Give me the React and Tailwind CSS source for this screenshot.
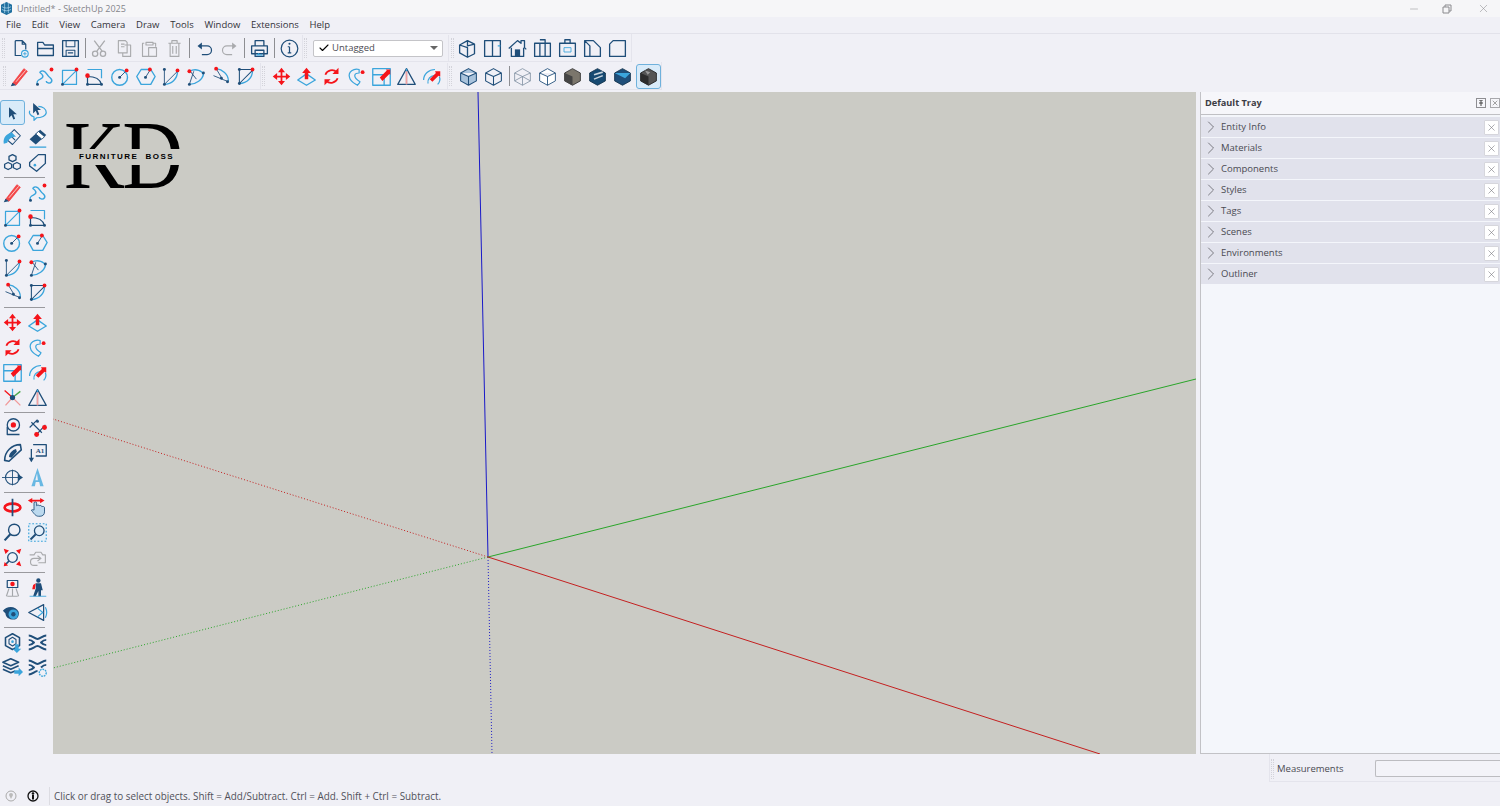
import { ChevronRight, X, Minus, Check } from "lucide-react";

const NAVY = "#1f4e79";
const BLUE = "#3ba5dc";
const RED = "#f5141a";
const GREY = "#a9aaad";

const R = ({ x, y, r = 2.2 }) => <circle cx={x} cy={y} r={r} fill={RED} stroke="none" />;
const N = ({ x, y, r = 1.7 }) => <circle cx={x} cy={y} r={r} fill={NAVY} stroke="none" />;
const B = ({ d, w = 1.4 }) => <path d={d} stroke={BLUE} strokeWidth={w} fill="none" />;
const D = ({ d, w = 1.4, f = "none" }) => <path d={d} stroke={NAVY} strokeWidth={w} fill={f} />;
const G = ({ d, w = 1.3 }) => <path d={d} stroke={GREY} strokeWidth={w} fill="none" />;
const F = ({ d, c = RED }) => <path d={d} fill={c} stroke="none" />;

const icons = {
  new: <><D d="M6 3h8l4 4v6M14 3v4h4M6 3v17h7" /><circle cx="17" cy="18" r="3.800" stroke={BLUE} strokeWidth="1.300" fill="none" /><B d="M17 16v4M15 18h4" w={1} /></>,
  open: <D d="M3 20V5h6l2 3h10v12zM3 12h18" w={1.500} />,
  save: <><D d="M3 3h18v18H3z" w={1.500} /><D d="M7 3v7h10V3M7 21v-7h10v7M9 17h6" w={1.200} /></>,
  cut: <><G d="M6 3l9 12M18 3l-9 12" w={1.500} /><circle cx="7" cy="18" r="3" stroke={GREY} strokeWidth="1.500" fill="none" /><circle cx="16" cy="18" r="3" stroke={GREY} strokeWidth="1.500" fill="none" /></>,
  copy: <><G d="M5 3h8l2 2v12H5zM8 7h4M8 10h4" /><G d="M12 8h7v13h-9v-4" /></>,
  paste: <><G d="M8 5h8v3H8zM6 6H4v15h7M16 6h3v4" /><G d="M11 11h9v10h-9z" /></>,
  trash: <G d="M5 6h14M9 6V3h6v3M7 6v15h10V6M10 9v9M14 9v9" />,
  undo: <><D d="M8 9h7a5 5 0 0 1 0 10H9" w={1.400} /><F c={NAVY} d="M4 9l5-4v8z" /></>,
  redo: <><G d="M16 9H9a5 5 0 0 0 0 10h6" /><F c={GREY} d="M20 9l-5-4v8z" /></>,
  print: <><D d="M7 9V3h10v6M3 9h18v9H3zM7 14h10v7H7z" w={1.500} /><path d="M8 20l3-3 2 2 1-1 2 2z" fill={BLUE} /></>,
  info: <><circle cx="12" cy="12" r="9.500" stroke={NAVY} strokeWidth="1.400" fill="none" /><D d="M12 10v7M10 17h4M10 10h2" /><N x={12} y={6.500} r={1.200} /></>,
  iso: <D d="M3 8l9-5 8 4v11l-8 4-9-5zM12 3v6l8-2M3 8l9 3v10" w={1.500} />,
  top: <><D d="M3 3h18v18H3zM12 3v18" w={1.500} /><B d="M18 9h3" /></>,
  front: <><D d="M2 12l10-9 4 3V3h4v8l2 2M5 11v10h14V11" w={1.500} /><path d="M9 21v-8h6v8z" fill={NAVY} /></>,
  right: <D d="M3 6h18v15H3zM9 6v15M15 6v15M9 2h6v4" w={1.500} />,
  back: <><D d="M3 6h18v15H3zM9 6V2h6v4" w={1.500} /><B d="M8 11h8v5H8z" w={1} /></>,
  left: <D d="M3 21V3l10 0 8 8v10zM3 3l6 6v12" w={1.500} />,
  bottom: <D d="M7 3h14v18H3V7z" w={1.500} />,
  pencil: <><path d="M4 20L17 3l4 3L8 22z" fill="#f24a4a" stroke={RED} strokeWidth=".6" /><path d="M8 18L19 5" stroke="#fff" strokeWidth=".8" /><path d="M2 23l2-4 4 3z" fill={NAVY} /></>,
  free: <><B d="M4 21C1 14 12 16 10 11 8 7 5 8 8 6c4-2 6 2 8 5 2 3 6 4 4 7-2 3-6 1-6-1" w={1.600} /><N x={4} y={21} /><R x={20} y={4} /></>,
  rect: <><B d="M4 5h16v16H4zM4 21L20 5" /><N x={4} y={21} /><R x={20} y={4} /></>,
  rrect: <><B d="M4 4h16v10" /><D d="M4 12c8 0 14 2 16 9M4 12v9h16" /><R x={4} y={11} r={2.600} /><N x={4} y={21} /><N x={20} y={21} /></>,
  circle: <><circle cx="11" cy="13" r="9" stroke={BLUE} strokeWidth="1.600" fill="none" /><D d="M11 13l8-8" w={1} /><N x={11} y={13} /><R x={19} y={5} /></>,
  poly: <><B d="M7 4h11l5 8-5 9H7l-5-9z" w={1.600} /><D d="M12 13l5-8" w={1} /><N x={12} y={13} /><R x={17} y={4} /></>,
  arc: <><B d="M5 21c8 0 15-6 15-15" w={1.600} /><D d="M5 21V5M5 21L20 6" w={1} /><N x={5} y={4} /><N x={5} y={21} /><R x={20} y={5} /></>,
  arc2: <><B d="M5 6c8-4 15 0 16 4-1 5-8 11-16 11" w={1.500} /><D d="M5 21l5-15M6 6l7 9" w={1} /><R x={5} y={6} /><N x={21} y={8} /><N x={5} y={21} /></>,
  arc3: <><B d="M7 3c7 1 14 6 14 14" w={1.500} /><D d="M4 11l17 7M7 3l6 10" w={1} /><R x={7} y={3} /><N x={20} y={18} /><N x={13} y={14} /></>,
  pie: <><B d="M5 20C14 20 20 13 20 5" w={1.500} /><D d="M5 4v16M5 4h15M5 20L20 5" w={1.200} /><N x={5} y={4} /><N x={5} y={20} /><R x={20} y={4} /></>,
  move: <F d="M12 2l4 5h-3v4h4V8l5 4-5 4v-3h-4v4h3l-4 5-4-5h3v-4H7v3l-5-4 5-4v3h4V7H8z" />,
  push: <><B d="M2 16l10-7 10 7-10 6z" w={1.600} /><path d="M12 2l5 6h-3v7h-4V8H7z" fill={RED} /></>,
  rotate: <><path d="M5 10a8 8 0 0 1 13-3" stroke={RED} strokeWidth="2" fill="none" /><path d="M19 14a8 8 0 0 1-13 3" stroke={RED} strokeWidth="2" fill="none" /><F d="M20 2v7h-7zM4 22v-7h7z" /></>,
  follow: <><B d="M15 4c-6-2-13 3-11 9 1 5 6 7 9 9 2-2 3-3 3-4-3-2-6-4-6-7 0-2 3-3 5-3z" /><R x={19} y={7} /></>,
  scale: <><B d="M2 3h20v19H2zM2 10h13v12" w={1.500} /><path d="M10 13l8-8-1-1h5v6l-1-1-8 8z" fill={RED} /></>,
  offset: <><D d="M2 21L12 3l10 18z" /><B d="M12 3v18" /><path d="M11 6h2v15h-2z" fill="#f2a0a0" /></>,
  offset2: <><B d="M3 16c0-7 6-12 13-12" /><B d="M8 20c-1-5 3-9 7-9M21 12c1 3 0 7-2 9" /><path d="M10 15l7-7-1-2h6v6l-2-1-7 7z" fill={RED} /></>,
  axes2: <><path d="M12 12L3 4" stroke={RED} strokeWidth="1.500" /><path d="M12 12L21 5" stroke="#4aa84a" strokeWidth="1.500" /><path d="M12 12V2" stroke={BLUE} strokeWidth="1.500" /><path d="M12 12L4 21M12 12l9 9" stroke="#f09a9a" strokeWidth="1.500" /><N x={12} y={12} r={3} /></>,
  select: <F c={NAVY} d="M8 6l9 8h-4l2 5-2 1-2-5-3 3z" />,
  lasso: <><B d="M13 5c5 0 9 3 9 7s-6 6-11 6l-3 3v-4C4 16 2 13 3 10" /><F c={NAVY} d="M7 1l9 8h-4l2 5-2 1-2-5-3 3z" /></>,
  paint: <><D d="M14 3l7 7-9 10-8-7zM9 9l6 6" w={1.200} /><path d="M2 19C1 12 5 8 11 6l5 5c-5 0-9 3-10 7z" fill={BLUE} /></>,
  erase: <><path d="M3 14L15 3l7 6-12 11z" fill={NAVY} /><path d="M13 5l7 6-3 3-7-6z" fill="#fff" stroke={NAVY} /><path d="M3 23h19" stroke={BLUE} strokeWidth="1.500" /></>,
  comps: <D d="M12 3l4 2v4l-4 2-4-2V5zM7 12l4 2v4l-4 2-4-2v-4zM17 12l4 2v4l-4 2-4-2v-4z" w={1.500} />,
  tag: <><D d="M3 12L13 3h8v10L11 22l-8-6z" w={1.500} /><circle cx="9" cy="15" r="1.500" fill={BLUE} /></>,
  tape: <><circle cx="13" cy="9" r="7" stroke={NAVY} strokeWidth="1.500" fill="none" /><R x={13} y={9} r={3} /><D d="M6 11v9h14" w={1.500} /></>,
  dim: <><D d="M3 12L12 3M10 21l11-12M5 6l12 12" w={1.300} /><R x={20} y={12} r={2.800} /><R x={11} y={20} r={2.800} /><N x={12} y={5} /></>,
  proto: <><path d="M3 21C3 11 11 3 21 3l1 6L8 22z" fill="none" stroke={NAVY} strokeWidth="1.800" /><path d="M8 17c0-4 4-8 8-9l1 3-6 7z" fill={NAVY} /></>,
  text: <><D d="M7 3h15v13H10" w={1.500} /><text x="10" y="13" fontSize="8" fontWeight="700" fill={NAVY} fontFamily="Liberation Serif">A1</text><D d="M5 8v14" w={1.500} /><F c={NAVY} d="M2 18h6l-3 5z" /></>,
  axes: <><circle cx="12" cy="12" r="8" stroke={NAVY} strokeWidth="1.300" fill="none" /><D d="M0 12h22M12 3v18" w={1} /><F c={NAVY} d="M18 8l6 4-6 4z" /></>,
  text3: <><path d="M12 1L5 22h4l1-5h4l1 5h4z" fill={BLUE} opacity=".75" /><path d="M11.500 7l-2 8h3z" fill="#f0f0f6" /></>,
  orbit: <><ellipse cx="12" cy="12" rx="9" ry="4.500" stroke={RED} strokeWidth="3" fill="none" /><path d="M11 2h2v20h-2z" fill={NAVY} /></>,
  pan: <><path d="M8 11V7c0-2 3-2 3 0v3c1-1 3-1 3 0 1-1 3 0 3 1 1-.5 3 0 3 1v5c0 3-2 5-5 5h-2c-3 0-5-3-8-7 1-1 3 0 3 0z" fill="#bcd9ee" stroke={NAVY} strokeWidth="1" /><F d="M1 4l5-3v2h9V1l5 3-5 3V5H6v2z" /></>,
  zoom: <><circle cx="14" cy="9" r="6.500" stroke={NAVY} strokeWidth="1.600" fill="none" /><path d="M9.500 14L3 21" stroke={NAVY} strokeWidth="2.500" /></>,
  zoomw: <><path d="M2 2h20v20H2z" stroke={BLUE} strokeWidth="1.300" strokeDasharray="2 2" fill="#e4eff9" /><circle cx="14" cy="10" r="5.500" stroke={NAVY} strokeWidth="1.500" fill="none" /><path d="M10 14l-6 6" stroke={NAVY} strokeWidth="2.200" /></>,
  zoome: <><circle cx="12" cy="12" r="5.500" stroke={NAVY} strokeWidth="1.500" fill="none" /><path d="M8 16l-4 4" stroke={NAVY} strokeWidth="2" /><path d="M2 2l6 2-4 4zM22 2l-2 6-4-4zM22 22l-6-2 4-4z" fill={RED} /><path d="M2 22l1-5 4 4z" fill={RED} /></>,
  prev: <><G d="M3 9h5l2-3h6l2 3h3v9h-8" /><G d="M12 21H8a4 4 0 0 1 0-8h8M12 10l4 3-4 3" /></>,
  camera: <><D d="M6 4h12v8H6z" w={1.400} /><R x={12} y={8} r={2.600} /><path d="M8 13L5 22M16 13l3 9M12 13v9M6 22h12" stroke="#a4a7ab" strokeWidth="1.300" /></>,
  walk: <><circle cx="13" cy="4" r="2.500" fill={NAVY} /><path d="M10 7h6l2 8h-2v7h-3v-6l-3 6H7l3-9z" fill={NAVY} /><path d="M7 9l3-2-1 7H6z" fill={RED} /><path d="M3 22h19" stroke={BLUE} strokeWidth="1" /></>,
  eye: <><path d="M1 10c4-6 15-6 18 1 1 4-1 9-6 9s-9-3-9-7z" fill={NAVY} /><circle cx="13" cy="14" r="5.500" fill={BLUE} /><circle cx="13" cy="14" r="2.500" fill={NAVY} /></>,
  section: <><D d="M2 12L19 3v18z" /><B d="M12 7l6 5-6 5" /><B d="M21 6c2 4 2 8 0 12" /></>,
  wh: <><D d="M12 2l8 4.500v9L12 20l-8-4.500v-9z" w={1.800} /><D d="M12 6l4 2.500v5L12 16l-4-2.500v-5z" w={1.200} /><F c={BLUE} d="M15 14h4v5h3l-5 5-5-5h3z" /><circle cx="12" cy="11" r="1.500" fill={BLUE} /></>,
  ext: <D d="M2 4c4 0 7 4 10 4s6-4 10-4M2 9c3 0 6 3 6 3s-3 3-6 3M22 9c-3 0-6 3-6 3s3 3 6 3M2 20c4 0 7-4 10-4s6 4 10 4" w={2.200} />,
  layers: <><D d="M10 2l9 4-9 4-9-4zM1 10l9 4 9-4M1 14l9 4 5-2" w={1.800} /><F c={BLUE} d="M14 15h5v-3l5 5-5 5v-3h-5z" /></>,
  extg: <><D d="M2 4c4 0 7 4 10 4s6-4 10-4M2 9c3 0 6 3 6 3s-3 3-6 3M22 9c-3 0-6 3-6 3M2 20c4 0 7-4 10-4" w={2.200} /><circle cx="18" cy="18" r="4" stroke={BLUE} strokeWidth="1.600" fill="none" strokeDasharray="2 1" /></>,
  sxray: <D d="M3 8l9-5 9 5v9l-9 5-9-5zM3 8l9 4 9-4M12 12v10" w={1.200} f="#a9c3dc" />,
  swire: <D d="M3 8l9-5 9 5v9l-9 5-9-5zM3 8l9 4 9-4M12 12v10" w={1.200} />,
  sline: <path d="M3 8l9-5 9 5v9l-9 5-9-5zM3 8l9 4 9-4M12 12v10M3 17l9-5 9 5" stroke="#7d8da0" strokeWidth=".900" fill="none" />,
  shidden: <D d="M3 8l9-5 9 5v9l-9 5-9-5zM3 8l9 4 9-4M12 12v10" w={1} f="#fff" />,
  sshade: <><path d="M3 8l9-5 9 5v9l-9 5-9-5z" fill="#7b766c" stroke="#333" strokeWidth="1" /><path d="M3 8l9 4v10l-9-5z" fill="#444" /></>,
  stex: <><path d="M3 8l9-5 9 5v9l-9 5-9-5z" fill="#174a72" stroke="#12324c" /><path d="M8 10l10-3M8 15l10-4" stroke="#c8d4dd" strokeWidth="1.800" /></>,
  smono: <><path d="M3 8l9-5 9 5v9l-9 5-9-5z" fill={NAVY} stroke="#12324c" /><path d="M3 8l18 0-6 6z" fill={BLUE} /></>,
  sall: <><path d="M3 8l9-5 9 5v9l-9 5-9-5z" fill="#555" stroke="#222" /><path d="M3 8l9 4v10l-9-5z" fill="#2c2c2c" /><path d="M8 5l6 2-3 3z" fill="#999" /></>,
};

function Icon({ name, active, size = 21 }) {
  return (
    <div className={`flex h-[25px] w-[25px] shrink-0 items-center justify-center ${active ? "rounded-[3px] border border-[#6fb1dc] bg-[#d9ebf9]" : ""}`}>
      <svg width={size} height={size} viewBox="0 0 24 24" strokeLinejoin="round">{icons[name]}</svg>
    </div>
  );
}

function Grip() {
  return <div className="mx-[1px] h-[20px] w-[3px] shrink-0 border-x border-dotted border-[#d3d3da]" />;
}

function VSep({ className = "mx-[2px]" }) {
  return <div className={`h-[20px] w-[1px] shrink-0 bg-[#8d8e92] ${className}`} />;
}

function Row({ names }) {
  return names.map((n) => <Icon key={n} name={n} />);
}

const menus = ["File", "Edit", "View", "Camera", "Draw", "Tools", "Window", "Extensions", "Help"];
const panels = ["Entity Info", "Materials", "Components", "Styles", "Tags", "Scenes", "Environments", "Outliner"];
const leftGroups = [
  [["select", "lasso"], ["paint", "erase"], ["comps", "tag"]],
  [["pencil", "free"], ["rect", "rrect"], ["circle", "poly"], ["arc", "arc2"], ["arc3", "pie"]],
  [["move", "push"], ["rotate", "follow"], ["scale", "offset2"], ["axes2", "offset"]],
  [["tape", "dim"], ["proto", "text"], ["axes", "text3"]],
  [["orbit", "pan"], ["zoom", "zoomw"], ["zoome", "prev"]],
  [["camera", "walk"], ["eye", "section"]],
  [["wh", "ext"], ["layers", "extg"]],
];

export default function App() {
  return (
    <div className="flex h-[806px] w-[1500px] flex-col overflow-hidden bg-[#f0f0f6] font-['Open_Sans','Liberation_Sans',sans-serif] text-[9.500px] text-[#3c3c44]">
      {/* title bar */}
      <div className="flex h-[17px] shrink-0 items-center bg-[#f6f6f8]">
        <svg className="ml-[1px] mr-[5px]" width="11" height="13" viewBox="0 0 12 14"><path d="M6 0l6 3v8l-6 3-6-3V3z" fill="#1f6f9f" /><path d="M1 5c3 2 7 2 10 0M1 8c3 2 7 2 10 0M4 1v11M8 1v11" stroke="#bfe3f5" strokeWidth=".7" fill="none" /></svg>
        <span className="text-[9px] text-[#85858b]">Untitled* - SketchUp 2025</span>
        <div className="ml-auto flex items-center text-[#8a8a8e]">
          <Minus size={12} strokeWidth={1} />
          <svg className="ml-[22px]" width="10" height="10" viewBox="0 0 10 10"><path d="M1 3h6v6H1zM3 3V1h6v6H7" fill="none" stroke="#8a8a8e" /></svg>
          <X className="ml-[25px] mr-[10px]" size={13} strokeWidth={1} />
        </div>
      </div>
      {/* menu */}
      <div className="flex h-[17px] shrink-0 items-center gap-[10.700px] border-b border-[#e2e2ea] pl-[6px] pt-[1px] text-[#33333a]">
        {menus.map((m) => <span key={m}>{m}</span>)}
      </div>
      {/* toolbar row 1 */}
      <div className="flex h-[28px] shrink-0 items-center">
        <div className="flex h-full w-[632px] items-center border-b border-r border-[#e4e4ec] pl-[1px] pt-[1px]">
          <Grip />
          <div className="w-[2px]" />
          <Row names={["new", "open", "save"]} />
          <VSep className="ml-[2px] mr-[1px]" />
          <Row names={["cut", "copy", "paste", "trash"]} />
          <VSep />
          <Icon name="undo" />
          <Icon name="redo" />
          <VSep />
          <Icon name="print" />
          <VSep />
          <Icon name="info" />
          <div className="h-full w-[1px] bg-[#e4e4ec]" />
          <Grip />
          <div className="ml-[5px] mr-[2px] flex h-[17px] w-[130px] shrink-0 items-center rounded-[2px] border border-[#c4c4c8] bg-white pl-[4px] text-[#4b4b52]">
            <Check size={12} strokeWidth={2.200} className="mr-[2px] text-black" />
            <span>Untagged</span>
            <svg className="ml-auto mr-[4px]" width="8" height="5" viewBox="0 0 8 5"><path d="M0 0h8L4 4z" fill="#666" /></svg>
          </div>
          <div className="ml-[3px] h-full w-[1px] bg-[#e4e4ec]" />
          <div className="w-[1px]" />
          <Grip />
          <Row names={["iso", "top", "front", "right", "back", "left", "bottom"]} />
        </div>
      </div>
      {/* toolbar row 2 */}
      <div className="flex h-[28px] shrink-0 items-center">
        <div className="flex h-full w-[662px] items-center border-b border-r border-[#e4e4ec] pl-[2px] pt-[1px]">
          <Grip />
          <Row names={["pencil", "free", "rect", "rrect"]} />
          <div className="w-[1px]" />
          <Row names={["circle", "poly", "arc", "arc2", "arc3", "pie"]} />
          <div className="ml-[2px] h-full w-[1px] bg-[#e4e4ec]" />
          <Grip />
          <div className="w-[4px]" />
          <Row names={["move", "push", "rotate", "follow", "scale", "offset", "offset2"]} />
          <div className="ml-[3px] h-full w-[1px] bg-[#e4e4ec]" />
          <Grip />
          <div className="w-[4px]" />
          <Row names={["sxray", "swire"]} />
          <VSep className="ml-[3px] mr-[0px]" />
          <Row names={["sline", "shidden", "sshade", "stex", "smono"]} />
          <div className="w-[1px]" />
          <Icon name="sall" active />
        </div>
      </div>
      {/* main */}
      <div className="mt-[2px] flex h-[662px] shrink-0">
        <div className="flex w-[53px] shrink-0 flex-col pt-[8px]">
          {leftGroups.map((group, i) => (
            <div key={i} className="flex flex-col">
              {i > 0 && <div className="my-[2px] ml-[4px] h-[1px] w-[41px] bg-[#9a9a9e]" />}
              {group.map((pair) => (
                <div key={pair[0]} className="flex">
                  {pair.map((n) => <Icon key={n} name={n} active={n === "select"} />)}
                </div>
              ))}
            </div>
          ))}
        </div>

        {/* canvas */}
        <div className="relative h-[662px] w-[1143px] shrink-0 overflow-hidden bg-[#cbcbc5]">
          <svg className="absolute inset-0" width="1143" height="662">
            <line x1="425" y1="0" x2="435" y2="465" stroke="#1a1ac8" />
            <line x1="435" y1="465" x2="439" y2="662" stroke="#2020c8" strokeDasharray="1 2" />
            <line x1="435" y1="465" x2="1143" y2="287" stroke="#2aa52a" />
            <line x1="435" y1="465" x2="0" y2="576" stroke="#2aa52a" strokeDasharray="1 2" />
            <line x1="435" y1="465" x2="1047" y2="662" stroke="#c42020" />
            <line x1="435" y1="465" x2="0" y2="327" stroke="#c42020" strokeDasharray="1 2" />
          </svg>
          <div className="absolute left-[11px] top-[31px] h-[66px] w-[118px]">
            <span className="absolute left-0 top-[-31px] origin-left scale-x-[0.87] whitespace-nowrap font-['Liberation_Serif',serif] text-[97px] leading-[128px] tracking-[-3px] text-black">KD</span>
            <div className="absolute left-0 top-[26px] h-[16px] w-[118px] bg-[#cbcbc5]" />
            <span className="absolute left-[15px] top-[28px] whitespace-nowrap font-['Liberation_Sans',sans-serif] text-[8px] font-bold leading-[12px] tracking-[1.450px] text-black">FURNITURE&nbsp; BOSS</span>
          </div>
        </div>

        {/* tray */}
        <div className="ml-[4px] flex h-[662px] flex-1 flex-col border-b border-l border-[#c2c2c6] bg-[#f4f6fb]">
          <div className="flex h-[23px] shrink-0 items-center border-b border-[#c0c0c4] bg-[#f6f6fa] pl-[4px] text-[9.200px] font-bold text-[#3c3c44]">
            <span>Default Tray</span>
            <div className="ml-auto flex gap-[4px]">
              <div className="flex h-[10px] w-[10px] items-center justify-center border border-[#8e8e92]"><svg width="6" height="6" viewBox="0 0 6 6"><path d="M1 0h4M3 0v6M1 3h4" stroke="#444" /></svg></div>
              <div className="flex h-[10px] w-[10px] items-center justify-center border border-[#a8a8ac] text-[#777]"><X size={8} /></div>
            </div>
          </div>
          <div className="flex flex-col gap-[1px] pt-[2px]">
            {panels.map((p) => (
              <div key={p} className="flex h-[20px] items-center bg-[#e1e2ec] text-[#4a4a52]">
                <ChevronRight className="text-[#66666c]" size={20} strokeWidth={1} />
                <span>{p}</span>
                <div className="ml-auto mr-[1px] flex h-[15px] w-[15px] items-center justify-center rounded-[1px] border border-[#d6d6dc] bg-white text-[#77777d]"><X size={11} strokeWidth={1.300} /></div>
              </div>
            ))}
          </div>
        </div>
      </div>
      {/* bottom */}
      <div className="flex h-[28px] shrink-0 justify-end">
        <div className="flex h-full w-[231px] items-center border-b border-l border-[#e4e4ec] pt-[2px]">
          <Grip />
          <span className="ml-[2px] w-[98px] pt-[1px] text-[#4a4a52]">Measurements</span>
          <div className="h-[17px] flex-1 rounded-l-[2px] border border-r-0 border-[#bcbcc0] bg-[#f3f3f8]" />
        </div>
      </div>
      <div className="flex min-h-0 flex-1 items-center pl-[5px] pt-[4px]">
        <svg width="12" height="12" viewBox="0 0 12 12"><circle cx="6" cy="6" r="5" fill="none" stroke="#aaa" /><path d="M6 9L4 5a2 2 0 1 1 4 0z" fill="#bbb" /></svg>
        <svg className="ml-[10px]" width="12" height="12" viewBox="0 0 12 12"><circle cx="6" cy="6" r="5" fill="none" stroke="#111" strokeWidth="1.300" /><circle cx="6" cy="3.500" r="1.300" fill="#111" /><path d="M5 5h2v4.500H5z" fill="#111" /></svg>
        <div className="ml-[10px] mr-[4px] h-[18px] w-[1px] bg-[#dcdce2]" />
        <span className="text-[9.900px] text-[#50505a]">Click or drag to select objects. Shift = Add/Subtract. Ctrl = Add. Shift + Ctrl = Subtract.</span>
      </div>
    </div>
  );
}
